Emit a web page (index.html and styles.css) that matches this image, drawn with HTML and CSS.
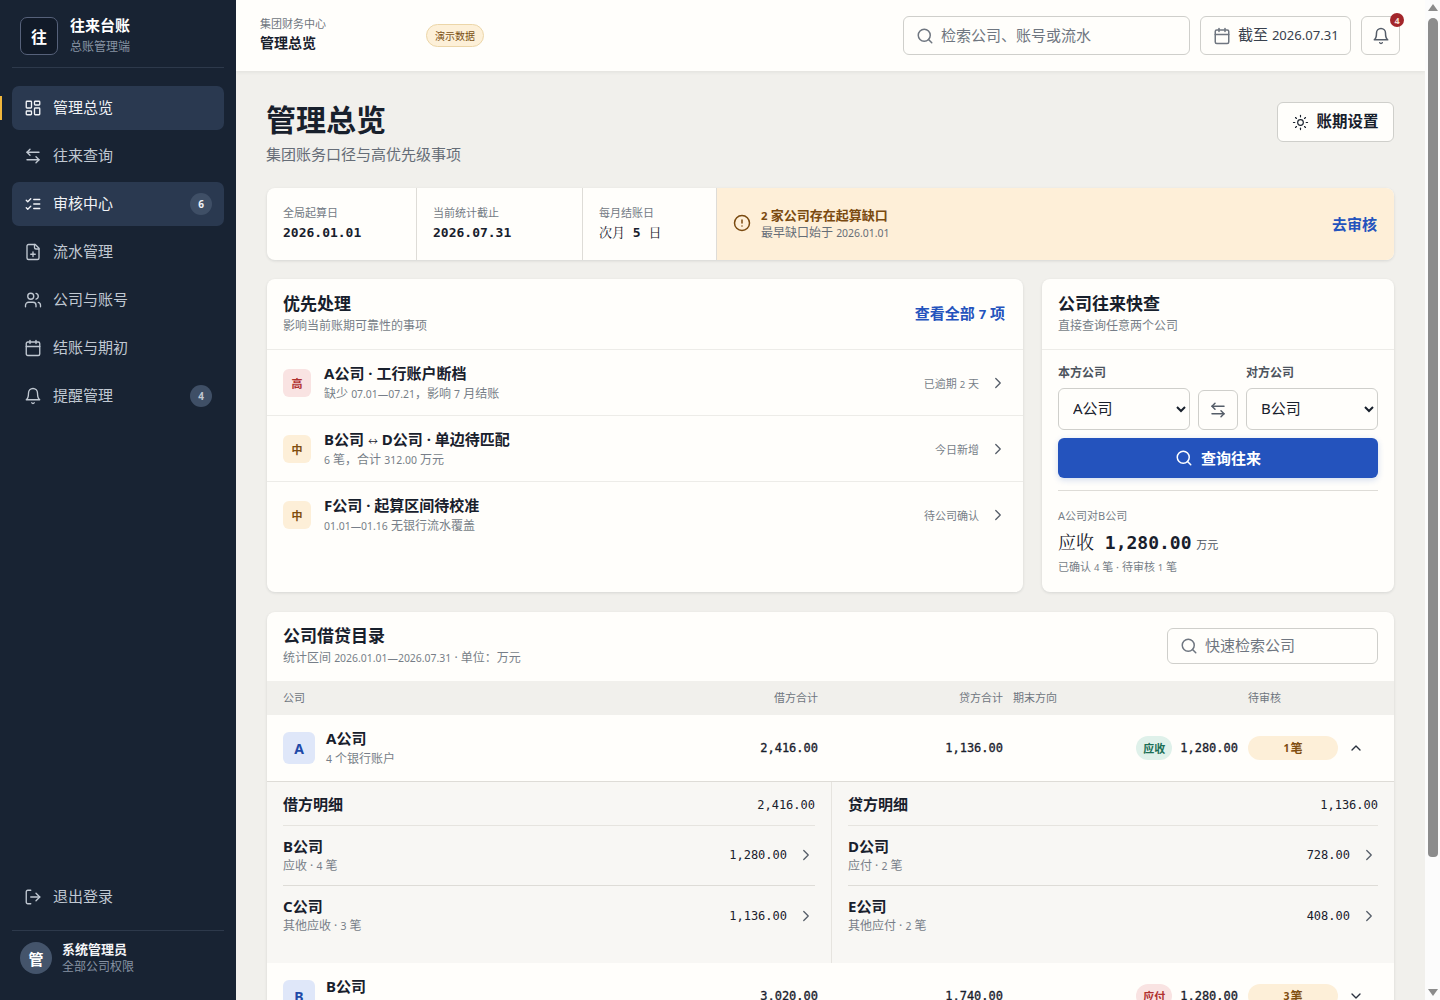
FILE: index.html
```html
<!DOCTYPE html>
<html lang="zh-CN">
<head>
	<meta charset="utf-8">
	<title>管理总览 - 往来台账</title>
	<link rel="stylesheet" href="styles.css">
</head>
<body>
	<svg class="sprite" xmlns="http://www.w3.org/2000/svg">
		<symbol id="i-grid" viewBox="0 0 24 24"><rect x="3" y="3" width="7" height="9" rx="1"/><rect x="14" y="3" width="7" height="5" rx="1"/><rect x="14" y="12" width="7" height="9" rx="1"/><rect x="3" y="16" width="7" height="5" rx="1"/></symbol>
		<symbol id="i-swap" viewBox="0 0 24 24"><path d="M8 3 4 7l4 4"/><path d="M4 7h16"/><path d="m16 21 4-4-4-4"/><path d="M20 17H4"/></symbol>
		<symbol id="i-checks" viewBox="0 0 24 24"><path d="m3 7 2 2 4-4"/><path d="m3 17 2 2 4-4"/><path d="M13 6h8"/><path d="M13 12h8"/><path d="M13 18h8"/></symbol>
		<symbol id="i-file" viewBox="0 0 24 24"><path d="M15 2H6a2 2 0 0 0-2 2v16a2 2 0 0 0 2 2h12a2 2 0 0 0 2-2V7Z"/><path d="M14 2v4a2 2 0 0 0 2 2h4"/><path d="M9 15h6"/><path d="M12 12v6"/></symbol>
		<symbol id="i-users" viewBox="0 0 24 24"><path d="M16 21v-2a4 4 0 0 0-4-4H6a4 4 0 0 0-4 4v2"/><circle cx="9" cy="7" r="4"/><path d="M22 21v-2a4 4 0 0 0-3-3.87"/><path d="M16 3.13a4 4 0 0 1 0 7.75"/></symbol>
		<symbol id="i-cal" viewBox="0 0 24 24"><path d="M8 2v4"/><path d="M16 2v4"/><rect x="3" y="4" width="18" height="18" rx="2"/><path d="M3 10h18"/></symbol>
		<symbol id="i-bell" viewBox="0 0 24 24"><path d="M6 8a6 6 0 0 1 12 0c0 7 3 9 3 9H3s3-2 3-9"/><path d="M10.3 21a1.94 1.94 0 0 0 3.4 0"/></symbol>
		<symbol id="i-logout" viewBox="0 0 24 24"><path d="M9 21H5a2 2 0 0 1-2-2V5a2 2 0 0 1 2-2h4"/><path d="m16 17 5-5-5-5"/><path d="M21 12H9"/></symbol>
		<symbol id="i-search" viewBox="0 0 24 24"><circle cx="11" cy="11" r="8"/><path d="m21 21-4.3-4.3"/></symbol>
		<symbol id="i-sun" viewBox="0 0 24 24"><circle cx="12" cy="12" r="4"/><path d="M12 2v2"/><path d="M12 20v2"/><path d="m4.93 4.93 1.41 1.41"/><path d="m17.66 17.66 1.41 1.41"/><path d="M2 12h2"/><path d="M20 12h2"/><path d="m6.34 17.66-1.41 1.41"/><path d="m19.07 4.93-1.41 1.41"/></symbol>
		<symbol id="i-alert" viewBox="0 0 24 24"><circle cx="12" cy="12" r="10"/><path d="M12 8v4"/><path d="M12 16h.01"/></symbol>
		<symbol id="i-right" viewBox="0 0 24 24"><path d="m9 18 6-6-6-6"/></symbol>
		<symbol id="i-up" viewBox="0 0 24 24"><path d="m18 15-6-6-6 6"/></symbol>
		<symbol id="i-down" viewBox="0 0 24 24"><path d="m6 9 6 6 6-6"/></symbol>
	</svg>

	<div class="app">
		<aside class="sidebar">
			<div class="brand">
				<div class="brand-logo">往</div>
				<div>
					<div class="brand-name">往来台账</div>
					<div class="brand-sub">总账管理端</div>
				</div>
			</div>
			<nav class="nav">
				<a class="nav-item current"><svg class="icon"><use href="#i-grid"/></svg>管理总览</a>
				<a class="nav-item"><svg class="icon"><use href="#i-swap"/></svg>往来查询</a>
				<a class="nav-item hover"><svg class="icon"><use href="#i-checks"/></svg>审核中心<span class="nav-count">6</span></a>
				<a class="nav-item"><svg class="icon"><use href="#i-file"/></svg>流水管理</a>
				<a class="nav-item"><svg class="icon"><use href="#i-users"/></svg>公司与账号</a>
				<a class="nav-item"><svg class="icon"><use href="#i-cal"/></svg>结账与期初</a>
				<a class="nav-item"><svg class="icon"><use href="#i-bell"/></svg>提醒管理<span class="nav-count muted">4</span></a>
			</nav>
			<a class="nav-item logout"><svg class="icon"><use href="#i-logout"/></svg>退出登录</a>
			<div class="user">
				<div class="user-avatar">管</div>
				<div>
					<div class="user-name">系统管理员</div>
					<div class="user-role">全部公司权限</div>
				</div>
			</div>
		</aside>

		<main class="main">
			<header class="topbar">
				<div class="crumbs">
					<div class="crumb-top">集团财务中心</div>
					<div class="crumb-title">管理总览</div>
				</div>
				<span class="demo-tag">演示数据</span>
				<div class="topbar-right">
					<div class="search top-search"><svg class="icon"><use href="#i-search"/></svg><span>检索公司、账号或流水</span></div>
					<div class="date-btn"><svg class="icon"><use href="#i-cal"/></svg><span>截至 <span class="n">2026.07.31</span></span></div>
					<div class="bell-btn"><svg class="icon"><use href="#i-bell"/></svg><span class="bell-count">4</span></div>
				</div>
			</header>

			<div class="content">
				<div class="page-head">
					<div>
						<h1>管理总览</h1>
						<p>集团账务口径与高优先级事项</p>
					</div>
					<div class="period-btn"><svg class="icon"><use href="#i-sun"/></svg>账期设置</div>
				</div>

				<section class="strip">
					<div class="strip-cell cell-a">
						<div class="strip-label">全局起算日</div>
						<div class="mono strip-value">2026.01.01</div>
					</div>
					<div class="strip-cell cell-b">
						<div class="strip-label">当前统计截止</div>
						<div class="mono strip-value">2026.07.31</div>
					</div>
					<div class="strip-cell cell-c">
						<div class="strip-label">每月结账日</div>
						<div class="mono strip-value"><span class="thin">次月</span> 5 <span class="thin">日</span></div>
					</div>
					<div class="strip-alert">
						<svg class="icon"><use href="#i-alert"/></svg>
						<div class="alert-text">
							<div class="alert-title"><span class="n">2</span> 家公司存在起算缺口</div>
							<div class="alert-sub">最早缺口始于 <span class="n">2026.01.01</span></div>
						</div>
						<a class="link">去审核</a>
					</div>
				</section>

				<div class="two-col">
					<section class="card">
						<div class="card-head">
							<div>
								<h2>优先处理</h2>
								<div class="card-sub">影响当前账期可靠性的事项</div>
							</div>
							<a class="link">查看全部 <span class="n">7</span> 项</a>
						</div>
						<div class="todo">
							<span class="level high">高</span>
							<div class="todo-text">
								<div class="todo-title">A公司 · 工行账户断档</div>
								<div class="todo-sub">缺少 <span class="n">07.01—07.21</span>，影响 <span class="n">7</span> 月结账</div>
							</div>
							<span class="todo-meta">已逾期 <span class="n">2</span> 天</span>
							<svg class="icon chev"><use href="#i-right"/></svg>
						</div>
						<div class="todo">
							<span class="level mid">中</span>
							<div class="todo-text">
								<div class="todo-title">B公司 <span class="arrow">↔</span> D公司 · 单边待匹配</div>
								<div class="todo-sub"><span class="n">6</span> 笔，合计 <span class="n">312.00</span> 万元</div>
							</div>
							<span class="todo-meta">今日新增</span>
							<svg class="icon chev"><use href="#i-right"/></svg>
						</div>
						<div class="todo last">
							<span class="level mid">中</span>
							<div class="todo-text">
								<div class="todo-title">F公司 · 起算区间待校准</div>
								<div class="todo-sub"><span class="n">01.01—01.16</span> 无银行流水覆盖</div>
							</div>
							<span class="todo-meta">待公司确认</span>
							<svg class="icon chev"><use href="#i-right"/></svg>
						</div>
					</section>

					<section class="card">
						<div class="card-head">
							<div>
								<h2>公司往来快查</h2>
								<div class="card-sub">直接查询任意两个公司</div>
							</div>
						</div>
						<div class="quick">
							<div class="quick-form">
								<label class="quick-label">本方公司</label>
								<span></span>
								<label class="quick-label">对方公司</label>
								<select class="quick-select"><option>A公司</option></select>
								<div class="swap-btn"><svg class="icon"><use href="#i-swap"/></svg></div>
								<select class="quick-select"><option>B公司</option></select>
							</div>
							<div class="primary-btn"><svg class="icon"><use href="#i-search"/></svg>查询往来</div>
							<div class="result">
								<div class="result-label">A公司对B公司</div>
								<div class="result-value"><span class="mono"><span class="thin">应收</span> 1,280.00</span> <small>万元</small></div>
								<div class="result-sub">已确认 <span class="n">4</span> 笔 · 待审核 <span class="n">1</span> 笔</div>
							</div>
						</div>
					</section>
				</div>

				<section class="card directory">
					<div class="dir-head">
						<div>
							<h2>公司借贷目录</h2>
							<div class="card-sub">统计区间 <span class="n">2026.01.01—2026.07.31</span> · 单位：万元</div>
						</div>
						<div class="search dir-search"><svg class="icon"><use href="#i-search"/></svg><span>快速检索公司</span></div>
					</div>
					<div class="dir-row dir-labels">
						<span>公司</span>
						<span class="num">借方合计</span>
						<span class="num">贷方合计</span>
						<span>期末方向</span>
						<span>待审核</span>
						<span></span>
					</div>
					<div class="dir-row company open">
						<div class="co">
							<span class="co-mark">A</span>
							<div>
								<div class="co-name">A公司</div>
								<div class="co-sub"><span class="n">4</span> 个银行账户</div>
							</div>
						</div>
						<span class="mono num">2,416.00</span>
						<span class="mono num">1,136.00</span>
						<div class="end">
							<span class="dir-tag in">应收</span>
							<span class="mono">1,280.00</span>
						</div>
						<span class="pending"><span class="n">1</span>笔</span>
						<svg class="icon toggle"><use href="#i-up"/></svg>
					</div>
					<div class="detail">
						<div class="detail-col">
							<div class="detail-head"><strong>借方明细</strong><span class="mono">2,416.00</span></div>
							<div class="detail-row">
								<div><div class="detail-name">B公司</div><div class="detail-sub">应收 · <span class="n">4</span> 笔</div></div>
								<span class="mono">1,280.00</span><svg class="icon chev"><use href="#i-right"/></svg>
							</div>
							<div class="detail-row">
								<div><div class="detail-name">C公司</div><div class="detail-sub">其他应收 · <span class="n">3</span> 笔</div></div>
								<span class="mono">1,136.00</span><svg class="icon chev"><use href="#i-right"/></svg>
							</div>
						</div>
						<div class="detail-col">
							<div class="detail-head"><strong>贷方明细</strong><span class="mono">1,136.00</span></div>
							<div class="detail-row">
								<div><div class="detail-name">D公司</div><div class="detail-sub">应付 · <span class="n">2</span> 笔</div></div>
								<span class="mono">728.00</span><svg class="icon chev"><use href="#i-right"/></svg>
							</div>
							<div class="detail-row">
								<div><div class="detail-name">E公司</div><div class="detail-sub">其他应付 · <span class="n">2</span> 笔</div></div>
								<span class="mono">408.00</span><svg class="icon chev"><use href="#i-right"/></svg>
							</div>
						</div>
					</div>
					<div class="dir-row company">
						<div class="co">
							<span class="co-mark">B</span>
							<div>
								<div class="co-name">B公司</div>
								<div class="co-sub"><span class="n">3</span> 个银行账户</div>
							</div>
						</div>
						<span class="mono num">3,020.00</span>
						<span class="mono num">1,740.00</span>
						<div class="end">
							<span class="dir-tag out">应付</span>
							<span class="mono">1,280.00</span>
						</div>
						<span class="pending"><span class="n">3</span>笔</span>
						<svg class="icon toggle"><use href="#i-down"/></svg>
					</div>
				</section>
			</div>
		</main>

		<div class="scrollbar">
			<span class="arrow-up"></span>
			<span class="thumb"></span>
			<span class="arrow-down"></span>
		</div>
	</div>
</body>
</html>
```

FILE: styles.css
```css
* {
	box-sizing: border-box;
}

html, body {
	height: 100%;
	margin: 0;
}

body {
	font-family: "Noto Sans", "Noto Sans CJK SC", sans-serif;
	color: #18202c;
	background: #f1f0ec;
	overflow: hidden;
}

h1, h2, p {
	margin: 0;
}

.sprite {
	display: none;
}

.icon {
	width: 18px;
	height: 18px;
	flex: none;
	fill: none;
	stroke: currentColor;
	stroke-width: 2;
	stroke-linecap: round;
	stroke-linejoin: round;
}

.mono {
	font-family: "DejaVu Sans Mono", "Noto Serif CJK SC", monospace;
}

.thin {
	font-weight: 400;
}

/* digits sit small next to the chinese text */
.n {
	font-size: 0.87em;
}

.app {
	display: flex;
	height: 100vh;
}

/* sidebar */
.sidebar {
	width: 236px;
	flex: none;
	display: flex;
	flex-direction: column;
	padding: 0 12px;
	background: #182333;
	color: #c0c8d2;
}

.brand {
	height: 68px;
	display: flex;
	align-items: center;
	gap: 12px;
	padding: 5px 8px 1px;
	border-bottom: 1px solid #2d394b;
}

.brand-logo {
	width: 38px;
	height: 38px;
	display: flex;
	align-items: center;
	justify-content: center;
	border: 1px solid #56617a;
	border-radius: 7px;
	background: #111a28;
	color: #fff;
	font-size: 16px;
	font-weight: 700;
}

.brand-name {
	color: #fff;
	font-size: 15px;
	font-weight: 700;
	line-height: 20px;
}

.brand-sub {
	margin-top: 3px;
	color: #8793a3;
	font-size: 12px;
	line-height: 18px;
}

.nav {
	flex: 1;
	display: flex;
	flex-direction: column;
	gap: 4px;
	padding-top: 18px;
}

/* the padding lifts the label, the icon and count margin undo it */
.nav-item {
	position: relative;
	height: 44px;
	flex: none;
	display: flex;
	align-items: center;
	gap: 11px;
	padding: 0 12px 4px;
	border-radius: 7px;
	font-size: 15px;
}

.nav-item .icon {
	width: 18px;
	height: 18px;
	margin-top: 4px;
	stroke-width: 1.8;
}

.nav-item.current,
.nav-item.hover {
	background: #2a3950;
	color: #f1f3f6;
}

.nav-item.current::before {
	content: "";
	position: absolute;
	left: -12px;
	top: 10px;
	width: 2px;
	height: 24px;
	background: #f0b63c;
}

.nav-count {
	width: 22px;
	height: 22px;
	margin: 4px 0 0 auto;
	display: flex;
	align-items: center;
	justify-content: center;
	border-radius: 50%;
	background: #3f4f66;
	color: #f1f3f6;
	font-size: 10px;
	font-weight: 700;
}

.nav-count.muted {
	color: #c0c8d2;
}

.logout {
	margin-bottom: 11px;
}

.user {
	height: 70px;
	display: flex;
	align-items: center;
	gap: 10px;
	padding: 0 8px 15px;
	border-top: 1px solid #2d394b;
}

.user-avatar {
	width: 32px;
	height: 32px;
	display: flex;
	align-items: center;
	justify-content: center;
	border-radius: 50%;
	background: #44546b;
	color: #fff;
	font-size: 15px;
	font-weight: 700;
}

.user-name {
	color: #f4f5f7;
	font-size: 13px;
	font-weight: 700;
	line-height: 18px;
}

.user-role {
	color: #8793a3;
	font-size: 12px;
	line-height: 18px;
}

/* main area */
.main {
	flex: 1;
	min-width: 0;
	overflow: hidden;
}

.scrollbar {
	width: 15px;
	flex: none;
	display: flex;
	flex-direction: column;
	align-items: center;
	padding: 4px 0 4px;
	background: #fcfcfc;
}

.arrow-up,
.arrow-down {
	width: 0;
	height: 0;
	border-left: 5px solid transparent;
	border-right: 5px solid transparent;
}

.arrow-up {
	border-bottom: 7px solid #8c8c8c;
}

.arrow-down {
	margin-top: auto;
	border-top: 7px solid #8c8c8c;
}

.thumb {
	width: 10px;
	height: 839px;
	margin-top: 7px;
	border-radius: 5px 5px 4px 4px;
	background: #8c8c8c;
}

.topbar {
	position: relative;
	height: 71px;
	display: flex;
	align-items: center;
	padding: 0 25px 0 24px;
	background: #fffefb;
	box-shadow: 0 1px 4px rgba(24, 32, 44, 0.08);
}

.crumbs {
	width: 166px;
	margin-bottom: 2px;
}

.crumb-top {
	color: #6f7680;
	font-size: 11px;
	line-height: 17px;
}

.crumb-title {
	font-size: 14px;
	font-weight: 700;
	line-height: 22px;
}

.demo-tag {
	height: 23px;
	display: flex;
	align-items: center;
	padding: 0 8px;
	border: 1px solid #ecd6a8;
	border-radius: 12px;
	background: #fdf0d8;
	color: #7a4f12;
	font-size: 10px;
}

.topbar-right {
	margin-left: auto;
	display: flex;
	align-items: center;
	gap: 10px;
}

.search {
	display: flex;
	align-items: center;
	gap: 7px;
	padding-bottom: 2px;
	border: 1px solid #cfcfcb;
	border-radius: 6px;
	background: #fffefb;
	color: #6f7680;
	font-size: 15px;
}

.search .icon {
	margin-top: 2px;
}

.top-search {
	width: 287px;
	height: 39px;
	padding-left: 12px;
}

.date-btn {
	width: 151px;
	height: 39px;
	display: flex;
	align-items: center;
	gap: 7px;
	padding: 0 12px 4px;
	border: 1px solid #cfcfcb;
	border-radius: 6px;
	color: #39414d;
	font-size: 15px;
	white-space: nowrap;
}

.date-btn .icon {
	margin-top: 4px;
	color: #6f7680;
}

.bell-btn {
	position: relative;
	width: 39px;
	height: 39px;
	display: flex;
	align-items: center;
	justify-content: center;
	border: 1px solid #cfcfcb;
	border-radius: 6px;
	color: #555d68;
}

.bell-count {
	position: absolute;
	top: -4px;
	right: -5px;
	width: 14px;
	height: 14px;
	display: flex;
	align-items: center;
	justify-content: center;
	border-radius: 50%;
	background: #a3262a;
	color: #f5dcd0;
	font-size: 9px;
	font-weight: 700;
}

.content {
	padding: 31px 31px 0 30px;
}

.page-head {
	display: flex;
	justify-content: space-between;
	align-items: flex-start;
	margin-bottom: 23px;
}

h1 {
	font-size: 30px;
	font-weight: 700;
	line-height: 36px;
}

.page-head p {
	margin-top: 5px;
	color: #666d77;
	font-size: 15px;
	line-height: 22px;
}

.period-btn {
	width: 117px;
	height: 40px;
	display: flex;
	align-items: center;
	justify-content: center;
	gap: 7px;
	padding-bottom: 4px;
	border: 1px solid #cfcfcb;
	border-radius: 6px;
	background: #fffefb;
	font-size: 15.5px;
	font-weight: 700;
}

.period-btn .icon {
	width: 17px;
	height: 17px;
	margin-top: 4px;
	stroke-width: 1.6;
}

/* strip */
.strip {
	height: 72px;
	margin-left: 1px;
	display: flex;
	border-radius: 8px;
	background: #fffefb;
	box-shadow: 0 1px 3px rgba(24, 32, 44, 0.12);
	overflow: hidden;
}

.strip-cell {
	padding: 17px 16px 0;
	border-right: 1px solid #dedcd7;
}

.cell-a {
	width: 150px;
}

.cell-b {
	width: 166px;
}

.cell-c {
	width: 134px;
}

.strip-label {
	color: #737a84;
	font-size: 11px;
	line-height: 16px;
}

.strip-value {
	margin-top: 3px;
	font-size: 13px;
	font-weight: 700;
	line-height: 18px;
}

.strip-alert {
	flex: 1;
	display: flex;
	align-items: center;
	gap: 10px;
	padding: 0 17px 2px 16px;
	background: #feefd8;
	color: #7a4a10;
}

.alert-text {
	flex: 1;
}

.alert-title {
	font-size: 13px;
	font-weight: 700;
	line-height: 19px;
}

.alert-sub {
	color: #666d77;
	font-size: 12px;
	line-height: 16px;
}

.link {
	color: #2453bd;
	font-size: 15px;
	font-weight: 700;
}

/* cards */
.two-col {
	display: grid;
	grid-template-columns: 756px 352px;
	gap: 19px;
	margin: 19px 0 20px 1px;
}

.card {
	border-radius: 8px;
	background: #fffefb;
	box-shadow: 0 1px 3px rgba(24, 32, 44, 0.12);
}

.card-head {
	height: 71px;
	display: flex;
	align-items: center;
	justify-content: space-between;
	padding: 0 18px 2px 16px;
	border-bottom: 1px solid #edecE8;
}

.card-head .link {
	margin-bottom: 2px;
}

h2 {
	font-size: 17px;
	font-weight: 700;
	line-height: 24px;
}

.card-sub {
	margin-top: 1px;
	color: #777e88;
	font-size: 12px;
	line-height: 18px;
}

.todo {
	height: 66px;
	display: flex;
	align-items: center;
	padding: 0 16px;
	border-bottom: 1px solid #edecE8;
}

.todo.last {
	border-bottom: 0;
}

.level {
	width: 28px;
	height: 28px;
	margin-right: 13px;
	display: flex;
	align-items: center;
	justify-content: center;
	border-radius: 6px;
	font-size: 11px;
	font-weight: 700;
}

.level.high {
	background: #f9e3e2;
	color: #b0312f;
}

.level.mid {
	background: #fdefd8;
	color: #7f4d0e;
}

.todo-text {
	flex: 1;
}

.todo-title {
	font-size: 15px;
	font-weight: 700;
	line-height: 21px;
}

.arrow {
	font-size: 10px;
	font-weight: 400;
	line-height: 1;
}

.todo-sub {
	margin-top: 1px;
	color: #777e88;
	font-size: 12px;
	line-height: 18px;
}

.todo-meta {
	color: #777e88;
	font-size: 11px;
	margin-right: 10px;
}

.chev {
	width: 18px;
	height: 18px;
	color: #555d68;
	stroke-width: 1.7;
}

.quick {
	padding: 14px 16px 16px;
}

.quick-form {
	display: grid;
	grid-template-columns: 132px 40px 132px;
	grid-template-rows: auto 42px;
	gap: 6px 8px;
	align-items: end;
}

.quick-label {
	color: #4d545e;
	font-size: 12px;
	font-weight: 700;
	line-height: 18px;
}

.quick-select {
	width: 132px;
	height: 42px;
	padding: 0 10px 2px;
	border: 1px solid #cfcfcb;
	border-radius: 6px;
	background: #fffefb;
	color: #18202c;
	font-family: inherit;
	font-size: 15px;
}

.swap-btn {
	height: 40px;
	display: flex;
	align-items: center;
	justify-content: center;
	border: 1px solid #cfcfcb;
	border-radius: 6px;
	color: #555d68;
}

.primary-btn {
	height: 40px;
	margin-top: 8px;
	display: flex;
	align-items: center;
	justify-content: center;
	gap: 8px;
	padding-bottom: 2px;
	border-radius: 6px;
	background: #2453bd;
	box-shadow: 0 2px 6px rgba(36, 83, 189, 0.2);
	color: #fff;
	font-size: 15px;
	font-weight: 700;
}

.primary-btn .icon {
	margin-top: 2px;
}

.result {
	margin-top: 12px;
	padding-top: 16px;
	border-top: 1px solid #dedcd7;
}

.result-label {
	color: #777e88;
	font-size: 11px;
	line-height: 17px;
}

.result-value {
	margin-top: 5px;
	font-size: 18px;
	line-height: 26px;
}

.result-value .mono {
	font-weight: 700;
}

.result-value small {
	font-size: 11px;
	color: #4d545e;
}

.result-sub {
	color: #777e88;
	font-size: 11px;
	line-height: 17px;
}

/* directory */
.directory {
	margin-left: 1px;
	overflow: hidden;
}

.dir-head {
	height: 69px;
	display: flex;
	align-items: center;
	justify-content: space-between;
	padding: 0 16px 2px;
}

.dir-search {
	width: 211px;
	height: 36px;
	padding-left: 12px;
}

.dir-row {
	display: grid;
	grid-template-columns: minmax(0, 1fr) 175px 175px 225px 90px 30px;
	column-gap: 10px;
	align-items: center;
	padding: 0 16px;
	font-size: 12px;
}

.dir-labels {
	height: 34px;
	padding-bottom: 2px;
	background: #f1f0ec;
	color: #6f7680;
	font-size: 11px;
}

.num {
	text-align: right;
}

.company {
	height: 66px;
}

.company .mono {
	-webkit-text-stroke: 0.3px currentColor;
}

.company.open {
	height: 67px;
	border-bottom: 1px solid #dedcd7;
}

.co {
	display: flex;
	align-items: center;
	gap: 11px;
}

.co-mark {
	width: 32px;
	height: 32px;
	display: flex;
	align-items: center;
	justify-content: center;
	border-radius: 6px;
	background: #dfe7f9;
	color: #1f4aa8;
	font-size: 14px;
	font-weight: 700;
}

.co-name {
	font-size: 15px;
	font-weight: 700;
	line-height: 21px;
}

.co-sub {
	margin-top: 1px;
	color: #777e88;
	font-size: 12px;
	line-height: 18px;
}

.end {
	display: flex;
	align-items: center;
	justify-content: flex-end;
	gap: 8px;
}

.dir-tag {
	height: 24px;
	display: flex;
	align-items: center;
	padding: 0 7px;
	border-radius: 12px;
	font-size: 11px;
	font-weight: 700;
}

.dir-tag.in {
	background: #dff1ea;
	color: #1b6f55;
}

.dir-tag.out {
	background: #f9e3e2;
	color: #b0312f;
}

.pending {
	height: 24px;
	display: flex;
	align-items: center;
	justify-content: center;
	gap: 1px;
	border-radius: 12px;
	background: #fdefd8;
	color: #7f4d0e;
	font-size: 12px;
	font-weight: 700;
}

.toggle {
	width: 16px;
	height: 16px;
	color: #2a323e;
}

.detail {
	display: grid;
	grid-template-columns: 564px minmax(0, 1fr);
	background: #f8f7f4;
}

.detail-col {
	height: 181px;
	padding: 0 16px;
}

.detail-col + .detail-col {
	border-left: 1px solid #e6e4df;
}

.detail-head {
	height: 44px;
	display: flex;
	align-items: center;
	justify-content: space-between;
	border-bottom: 1px solid #e6e4df;
}

.detail-head strong {
	font-size: 15px;
}

.detail-head .mono {
	margin-top: 2px;
}

.detail-head .mono,
.detail-row .mono {
	font-size: 12px;
}

.detail-row {
	height: 60px;
	display: flex;
	align-items: center;
	padding-bottom: 1px;
	border-bottom: 1px solid #dedcd7;
}

.detail-row:last-child {
	border-bottom: 0;
}

.detail-row > div {
	flex: 1;
}

.detail-row .chev {
	margin: 0 0 0 10px;
}

.detail-name {
	font-size: 15px;
	font-weight: 700;
	line-height: 20px;
}

.detail-sub {
	margin-top: 1px;
	color: #777e88;
	font-size: 12px;
	line-height: 18px;
}
```
